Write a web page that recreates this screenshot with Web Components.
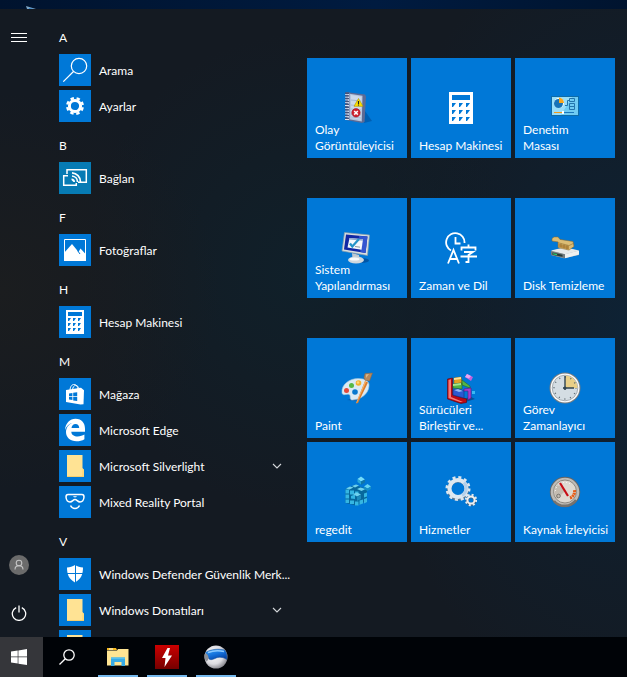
<!DOCTYPE html>
<html lang="tr">
<head>
<meta charset="utf-8">
<title>Başlat</title>
<style>
html, body { height: 100%; margin: 0; }
body { background: #00193a; color: #fff; font: 12px/16px Lato, "Noto Sans CJK JP", sans-serif; overflow: hidden; }
</style>
</head>
<body>
<start-desktop></start-desktop>
<script>
const ICONS = {
  menu: ['0 0 16 16', '<path d="M0 3.5h16M0 7.500h16M0 11.500h16" stroke="#fff"/>'],
  user: ['0 0 20 20', '<circle cx="10" cy="10" r="10" fill="#6b6b6b"/><g fill="none" stroke="#c4c4c4" stroke-width="1.100"><circle cx="10" cy="8" r="2.800"/><path d="M6 14.600c0-2.600 1.700-4 4-4s4 1.400 4 4"/></g>'],
  power: ['0 0 16 16', '<path d="M5.200 2.600a6.700 6.700 0 1 0 5.600 0M8 .5v7" fill="none" stroke="#fff" stroke-width="1.300"/>'],
  chevron: ['0 0 16 16', '<path d="M4 6l4 4 4-4" fill="none" stroke="#d5d8db" stroke-width="1.100"/>'],
  search: ['0 0 32 32', '<g fill="none" stroke="#fff" stroke-width="1.200"><circle cx="20" cy="12" r="7.700"/><path d="M14.500 17.500L4.300 27.700"/></g>'],
  taskSearch: ['0 0 16 16', '<g fill="none" stroke="#fff" stroke-width="1.300"><circle cx="10" cy="6" r="5.200"/><path d="M6.300 9.700L.5 15.500"/></g>'],
  settings: ['0 0 32 32', '<path fill="none" stroke="#fff" stroke-width="3" d="M16 10.400a5.600 5.600 0 1 1 0 11.200a5.600 5.600 0 1 1 0-11.200z"/><circle cx="16" cy="16" r="7.800" fill="none" stroke="#fff" stroke-width="2.400" stroke-dasharray="3.400 2.726" stroke-dashoffset="4.763"/>'],
  connect: ['0 0 32 32', '<g fill="none" stroke="#fff" stroke-width="1.500"><path d="M8 12V7.700h19.300v12.600H19"/><path d="M9 13.700H4.700v9.600h12.600V21"/><path d="M13 14a6 6 0 0 1 5.500 6M13 10.900a9 9 0 0 1 8.500 9" stroke-width="1.700"/></g><path d="M12.500 16.500a3.500 3.500 0 0 1 3.500 3.500h-1.500l-2-2z" fill="#fff"/>'],
  photos: ['0 0 32 32', '<path fill="none" stroke="#fff" d="M5.500 5.500h21v21h-21z"/><path fill="#fff" d="M5 19l8-9 6.500 8 2-3.500 5.500 6V27H5z"/><path d="M18.500 16.500l2.500 3.500" stroke="#0078d7"/>'],
  calc: ['0 0 32 32', '<path fill="#fff" d="M7 4h18v24H7z"/><path fill="#0078d7" d="M9 6h14v4H9zM9 12h3l-2 3H9zM14 12h3l-2 3h-1zM19 12h3l-2 3h-1zM9 17h3l-2 3H9zM14 17h3l-2 3h-1zM19 17h3l-2 3h-1zM9 22h3l-2 3H9zM14 22h3l-2 3h-1zM19 22h3l-2 3h-1z"/>'],
  calcBig: ['0 0 32 32', '<path fill="#fff" d="M4 0h24v32H4z"/><path fill="#0078d7" d="M7 3h18v5H7zM7 11h4l-3 4H7zM14 11h4l-3 4h-1zM21 11h4l-3 4h-1zM7 18h4l-3 4H7zM14 18h4l-3 4h-1zM21 18h4l-3 4h-1zM7 25h4l-3 4H7zM14 25h4l-3 4h-1zM21 25h4l-3 4h-1z"/>'],
  store: ['0 0 32 32', '<path d="M11 12.500c0-8 8-8 8-.5M13.500 12c.5-6 5.500-6 7-.500" fill="none" stroke="#fff" stroke-width="1"/><path fill="#fff" d="M7 12l15-2.300 3 2.500-.5 14L21.500 26.500 7 24z"/><path fill="#0078d7" d="M10 15.400l3.400-.5v3.300H10zM14.200 14.800l4-.6v4h-4zM10 19h3.400v3l-3.400-.5zM14.200 19h4v4l-4-.6z"/>'],
  edge: ['0 0 32 32', '<path fill="#fff" d="M6 16C6.500 9 11 4.700 16.500 4.700c6.500 0 9.500 4.500 9.500 10v3H12.300c.2 3.300 2.900 4.700 6.300 4.700 2.700 0 5-.8 6.800-1.900v4.800c-2.300 1.400-4.900 2-7.900 2-6.200 0-10.500-3.600-10.500-9.200 0-4.500 2.700-7.800 6.500-9.400C10 9.500 7.500 12 6 16zM12.500 14h7.700c0-2.300-1.100-4-3.700-4-2.400 0-3.800 1.800-4 4z"/>'],
  folder: ['0 0 32 32', '<path fill="#ffe394" d="M8 5h15.500v13l1.500 2v7H8z"/><path fill="#f7cf6d" d="M8 26h17v1H8z"/><path fill="#ffd97a" d="M23.500 18l1.500 2v6h-2z"/>'],
  mixed: ['0 0 32 32', '<g fill="none" stroke="#fff" stroke-width="1.500" stroke-linejoin="round"><path d="M9 8.500h14c1.500 0 2 1 2 2.500-.3 3.500-2 5-4 5-2.500 0-3-2.500-5-2.500s-2.500 2.500-5 2.500c-2 0-3.700-1.500-4-5 0-1.500.5-2.500 2-2.500z"/><path d="M11.500 19.500c1 2 2.700 3 4.500 3s3.500-1 4.500-3"/></g><path d="M14 10.300h4l-1 1h-2z" fill="#fff"/>'],
  defender: ['0 0 32 32', '<path fill="#fff" d="M16 7c2.500 1.600 5 2.200 8 2.500 0 6.500-1.700 11.500-8 15-6.300-3.500-8-8.500-8-15 3-.3 5.500-.9 8-2.500z"/><path stroke="#0078d7" d="M16.500 6v20M6 15.500h20"/>'],
  event: ['0 0 32 32', `<path fill="#004f9b" opacity=".6" d="M24 19l7 10-8 2z"/><path fill="#5d6a94" d="M5 0l19 2.500 1 2L23.500 30 21 31 5 28z"/><path fill="#b4c5dd" d="M7 1.500l14.500 2.200L20.800 29.500 6.500 27z"/><path fill="#cdd9ea" d="M10 3l10.500 1.700-.5 23L10 26z"/><path stroke="#9bb0d0" stroke-width=".8" d="M10 8l10 1M10 13l10 1M10 17l10 1M10 22l10 1M10 25l10 1"/><path d="M8.500 2v25" stroke="#8e9dbe" stroke-width="1"/><path d="M6 .5v28" stroke="#44527a" stroke-width="4" stroke-dasharray="1.500 1.300"/><path d="M6 1.900v27" stroke="#dfe5f2" stroke-width="4" stroke-dasharray=".8 2"/><path d="M17.500 6.500l4.500 7.800h-9z" fill="#ffe100" stroke="#a89000" stroke-width=".6"/><path d="M17.500 9v3M17.500 12.600v1" stroke="#222" stroke-width="1.200"/><circle cx="15" cy="20.800" r="4.200" fill="#cf2230" stroke="#a00f1b" stroke-width=".6"/><path d="M13.200 19l3.600 3.600m0-3.600l-3.600 3.600" stroke="#fff" stroke-width="1.500"/>`],
  control: ['0 0 32 32', '<path fill="#0e6ba8" d="M2 4h28v20H2z"/><path fill="#6fcbf3" d="M3 5h26v18H3z"/><path fill="#98ddf9" d="M3 5h20L12 23H3z"/><circle cx="10" cy="11" r="5" fill="#fff"/><circle cx="9.500" cy="11.500" r="4.500" fill="#1673b8"/><path fill="#f9a51b" d="M10 5.500a5.500 5.500 0 0 1 5 5.500h-5z"/><path fill="none" stroke="#2375ac" d="M16 13.500h2.500v-5H20M20.500 6.500h5v3h-5zM20.500 11.500h5v3h-5zM20.500 14.500h5v3h-5z"/><path d="M5 20.500h8" stroke="#f39a18"/><path d="M13 20.500h12" stroke="#1b78bd"/><path fill="#fff" d="M13 19h2v3h-2z"/>'],
  sysconfig: ['0 0 32 32', '<ellipse cx="20" cy="28.500" rx="8" ry="2.500" fill="#0056a7"/><path fill="#bfc9d1" d="M11 21l7 2 .5 4h-7z"/><ellipse cx="15" cy="28" rx="8" ry="3.500" fill="#cfd8dd"/><ellipse cx="13.500" cy="27" rx="5" ry="1.600" fill="#f9fbfb"/><path fill="#d8dedf" stroke="#849baa" stroke-width=".7" d="M3.500.5L28.500 3 26.500 23.500 1 19z"/><path fill="#1227a3" d="M5 2.500L26.500 4.500 24.500 21 3 17.500z"/><path fill="#3355d0" d="M18 4l8.500.6-2 16.400-5-1z"/><path fill="#f4f8fb" d="M8.500 6l13.500 1.200-1.500 10.500L6.500 15.500z"/><path fill="#8ba6cf" d="M8.500 6l13.500 1.200-.2 1.500L8.300 7.500z"/><path d="M9 11.500l2.300 3L18 7" fill="none" stroke="#2494c8" stroke-width="2.200"/><path d="M14 14.500l5 .700" stroke="#8b98a0"/>'],
  timelang: ['0 0 32 32', '<g fill="none" stroke="#fff" stroke-width="1.800"><path d="M6 18.500A9.200 9.200 0 1 1 19.500 11"/><path d="M10.500 5v6.500h5"/><path d="M3 31.500L8.500 18 14 31.500M5 27h7"/><path d="M16.500 18.500v-3h14v3M23.500 12.500v3M19 20h9l-4.500 3v7h-3M15.500 24.500H32"/></g>'],
  disk: ['0 0 32 32', '<g transform="translate(0 2.500) scale(1 .82)"><path fill="#aeb5b8" d="M2 20l14-4 14 4v5l-15 4L2 25z"/><path fill="#e6e9e9" d="M2 19.500L16 15.500l14 4-14 4.500z"/><path fill="#717b7e" d="M2 20l14 4v5L2 25z"/><path fill="#273a38" d="M3.500 22l10 2.700v2.500l-10-2.500z"/><path d="M4 23.500l4 1" stroke="#2fd173" stroke-width="1.500"/><path fill="#eef0f0" d="M16 24l14-4.500v5L16 29z"/><path fill="#dcbd75" stroke="#8a6a2c" stroke-width=".6" d="M3 5l2-2h4l2 3 13 2.500 1 6L20 19 9 16V9L3 8z"/><path fill="#b98d42" d="M9 11l11 3v4.500L9 15z"/><path d="M9 10l11 3.500 5-3M12 11v5m3-4v5m3-4v5" stroke="#8a6a2c" stroke-width=".6" fill="none"/></g>'],
  paint: ['0 0 32 32', '<path fill="#0a62b2" d="M6 28l8 1 12-9z"/><path fill="#dbeaf3" stroke="#9ec3da" stroke-width=".6" d="M1 21C0 12 9 6.500 17 6.500c8 0 11.500 3 11 7.500-.5 8-8 13.500-16.500 14-3 0-2-2.500-2.500-4.500C7.500 20 2 25 1 21z"/><circle cx="14" cy="20" r="2.800" fill="#0878ce"/><circle cx="5.500" cy="18.500" r="2.500" fill="#e5493b"/><circle cx="10.500" cy="13.500" r="2.500" fill="#56b844"/><circle cx="17.500" cy="11" r="2.800" fill="#f4b02c"/><circle cx="17" cy="10.500" r="1.300" fill="#fbd779"/><path fill="#dd7c2a" d="M24 9l3 1.500L17 31l-2 .5z"/><path fill="#f6b26b" d="M24 9l1.300.6L16 30.500l-1 .8z"/><path fill="#b8895c" stroke="#8b6442" stroke-width=".5" d="M24 1.500l7.500-.5-3 8-4.500-.7-1-2.800z"/><path fill="#dbb98b" d="M25 2.500l3-.5-3 4z"/>'],
  defrag: ['0 0 32 32', '<path fill="#074e97" d="M8 29l18-4 4 2-14 4.500z"/><path fill="#b90915" stroke="#65040a" stroke-width=".6" d="M2.500 7l5-1v17l14 4v3.500L16 31.500 2.500 27z"/><path fill="#f57a75" d="M3.500 8l2.500-.7V25l12 5h-3L3.500 26z"/><path fill="#e2a323" stroke="#936a13" stroke-width=".6" d="M9 6l7-1 1 6-8 1z"/><path fill="#ffe099" d="M9 6l7-1v2L9 8z"/><path fill="#54b544" stroke="#28672a" stroke-width=".6" d="M8 12l9-1v6l-9-1zM17 8l8 6v2l-8-3z"/><path fill="#a7e690" d="M8 12l8-1v2l-8 1z"/><path fill="#2b59d0" stroke="#192f82" stroke-width=".6" d="M8 18l5-1 6 2v7l-11-3z"/><path fill="#91b9f8" d="M9 18l4-1 5 2-4 1z"/><path fill="#a63fd0" stroke="#631675" stroke-width=".6" d="M19 17l7-1v10l-3 2v-9h-4z"/><path fill="#c160dc" d="M20 5l2-3 6 3-2 4z"/><path fill="#e9a6f2" d="M20 5l2-3 4 2-2 2.500z"/><path fill="#39b8f3" d="M27 19h3v3h-3z"/>'],
  task: ['0 0 32 32', '<circle cx="16" cy="16" r="15.500" fill="#777d80"/><circle cx="16" cy="16" r="14.500" fill="#fafafa"/><circle cx="16" cy="16" r="12.800" fill="#d4dde3" stroke="#8c959b" stroke-width=".7"/><path fill="#e9cf87" d="M16 16V3.500A12.500 12.500 0 0 1 28.500 16z"/><circle cx="16" cy="16" r="11" fill="none" stroke="#59666e" stroke-width="1.500" stroke-dasharray="1 4.760" stroke-dashoffset=".5"/><path d="M16 4v14M14 16h11" stroke="#304451" stroke-width="1.400"/><circle cx="16" cy="16" r="1.500" fill="#304451"/>'],
  regedit: ['0 0 32 32', '<path fill="#07689c" d="M4.500 13l9-4L26 13v12l-11 4.500L4.500 27z"/><path fill="#35b6e2" d="M4.500 13.500h3.500v4H4.500zM9 14.500h4v4H9zM14 15.500h3.500v3H14zM4.500 18.500h3.500v4H4.500zM4.500 23.500h3.500v3.500H4.500zM9 24.500h4V28H9zM14 25.500h3.500v4H14zM18.500 24.500l3.500-1v4l-3.500 1.300zM23 23l3-1v4l-3 1.500zM10 20l4-1.500V23l-4-.5zM23 17.500l3-1v4l-3 1z"/><path fill="#6fd2ee" d="M5 12.500l4-2 3.500 1-4 2zM11 10l4-1.500 3 1L14 11.500zM16 13l3.500-1.500 5 1.500-4 2zM12 18l4-1.500 4 2-4 2z"/><path fill="#1c8bbc" d="M16 21l4-2v4l-4 2z"/><path fill="#74dcf8" d="M16.500 3L20 .5 24 3.500l-4 2z"/><path fill="#2aa9d8" d="M16.500 3l3.500 2.500V8.500l-3.500-2.500z"/><path fill="#1177a9" d="M20 5.500l4-2V6.500l-4 2.500z"/><path fill="#65d3f2" d="M23 10.500l3.500-2.500 3.500 2.500-3.500 2z"/><path fill="#1590c7" d="M23 10.500l3.500 2v2.500L23 13zM26.500 12.500l3.500-2V13l-3.500 2z"/>'],
  services: ['0 0 32 32', '<g fill="none"><circle cx="13" cy="13.500" r="9" stroke="#5d7991" stroke-width="4"/><circle cx="13" cy="12.500" r="8.500" stroke="#dde8f1" stroke-width="4"/><circle cx="13" cy="12.500" r="11.200" stroke="#dde6ee" stroke-width="2.600" stroke-dasharray="3 2.864"/><path d="M19 6.500a8.500 8.500 0 0 1-2 13" stroke="#b5d0ea" stroke-width="3"/><circle cx="26" cy="24.500" r="3.800" stroke="#4e6378" stroke-width="3"/><circle cx="26" cy="24" r="3.600" stroke="#eef1f4" stroke-width="2"/><circle cx="26" cy="24" r="5.200" stroke="#e3eaf0" stroke-width="2" stroke-dasharray="2 2.084"/></g>'],
  resource: ['0 0 32 32', '<circle cx="16" cy="16" r="15.200" fill="#646464"/><circle cx="16" cy="16" r="14.300" fill="#bfbcb7"/><path d="M5 25A14 14 0 0 0 27 24" stroke="#77736e" stroke-width="2.500" fill="none"/><circle cx="16" cy="15.500" r="11.500" fill="#dfdad2" stroke="#8e8981"/><path fill="#c4bcb1" d="M8 23a11 11 0 0 1 1-15l7 7z"/><circle cx="9.500" cy="20" r="1.800" fill="none" stroke="#77736c"/><path d="M21 22c3-1 5-4 4.500-8" fill="none" stroke="#e75c17" stroke-width="3" stroke-dasharray="2 .6"/><path d="M6.500 15a9.500 9.500 0 0 1 16-6" stroke="#fff" stroke-dasharray="1 2" fill="none"/><path d="M11 7l8 13" stroke="#c70e16" stroke-width="2.200"/>'],
  windows: ['0 0 16 16', '<path fill="#fff" d="M0 2.400L6.700 1.500V7.600H0zM7.400 1.400L16 0v7.600H7.400zM0 8.300h6.700v6.200L0 13.600zM7.400 8.300H16V16l-8.600-1.300z"/>'],
  explorer: ['0 0 24 24', '<path fill="#f5b91d" d="M1 3h9l1 2h-10z"/><path fill="#fff" d="M3 3.500h4v1H3z"/><path fill="#ffe593" d="M1 5.500h10L12 4h10.500V20.500H1z"/><path fill="#37abe5" d="M5 12.500h14V21h-3.500v-4h-7v4H5z"/><path fill="#55c0ef" d="M5 12.500h14v1.500H5z"/>'],
  flash: ['0 0 24 24', '<defs><linearGradient id="r" x2="0" y2="1"><stop stop-color="#c00"/><stop offset="1" stop-color="#750000"/></linearGradient></defs><path fill="url(#r)" d="M0 0h24v24H0z"/><path fill="#fff" d="M12.500 3L7 13h3.500L9.500 22 17 10.500h-4L15 3z"/>'],
  iron: ['0 0 24 24', '<defs><radialGradient id="s" cx=".4" cy=".4" r=".68"><stop stop-color="#fff"/><stop offset=".6" stop-color="#dcdce1"/><stop offset="1" stop-color="#77777e"/></radialGradient><linearGradient id="b" x2=".6" y2="1"><stop stop-color="#3fa5f5"/><stop offset=".55" stop-color="#1572dc"/><stop offset="1" stop-color="#0745a6"/></linearGradient></defs><circle cx="12" cy="12" r="11.500" fill="url(#s)"/><path fill="url(#b)" stroke="#0a4796" stroke-width=".5" d="M1.500 7.500C7 4 15 3.500 20.500 5c2 2 2.700 5.500 2.300 9.500-3.500-2.500-8-3-11.800-1-2.500 1.300-4.500 1.500-6 .5L1.500 7.500z"/><path fill="#8d9096" d="M1 8.500c2 0 3.500 2 3.500 4.500 0 1.500-1 3-2.500 3.500-1.500-2.500-2-6-1-8z"/><path stroke="#8dcaff" stroke-width="1.500" fill="none" d="M4 7.500c5-2 11-2.300 16-1"/>'],
};

const define = (name, render) => customElements.define(name, class extends HTMLElement {
  connectedCallback() {
    if (this.shadowRoot) return;
    this.attachShadow({ mode: 'open' }).innerHTML = render(this);
  }
});
const RESET = 'button{font:inherit;color:inherit;border:0;margin:0;padding:0;background:none;text-align:left;cursor:default}button:hover{background-color:#ffffff1f}';

define('ui-icon', el => {
  const [box, art] = ICONS[el.getAttribute('name')];
  return `<style>:host{display:block;width:var(--icon,32px);height:var(--icon,32px);flex:none}svg{display:block;width:100%;height:100%}</style>
  <svg viewBox="${box}" aria-hidden="true">${art}</svg>`;
});

define('rail-button', el => `<style>${RESET}
  :host{display:block}
  button{display:grid;place-items:center;width:100%;height:48px}
  ui-icon{--icon:${el.getAttribute('size') || 16}px}
  </style><button aria-label="${el.getAttribute('label')}"><ui-icon name="${el.getAttribute('icon')}"></ui-icon></button>`);

define('app-group', el => `<style>${RESET}
  :host{display:block}
  button{display:block;width:100%;height:36px;padding-top:8px}
  </style><button>${el.getAttribute('letter')}</button><slot></slot>`);

define('app-row', el => `<style>${RESET}
  :host{display:block}
  button{display:flex;align-items:center;gap:8px;width:100%;height:36px}
  .pic{background:${el.getAttribute('color') || '#0078d7'}}
  .name{flex:1;min-width:0;white-space:nowrap;padding-top:2px}
  .more{--icon:16px;margin-right:3px}
  </style><button><ui-icon class="pic" name="${el.getAttribute('icon')}"></ui-icon><span class="name"><slot></slot></span>${
  el.hasAttribute('folder') ? '<ui-icon class="more" name="chevron"></ui-icon>' : ''}</button>`);

define('tile-group', () => `<style>
  :host{display:grid;grid-template-columns:repeat(3,100px);gap:4px}
  </style><slot></slot>`);

define('app-tile', el => `<style>${RESET}
  :host{display:block}
  button{display:grid;width:100%;height:100px;background:#0078d7;padding:0 4px 4px 8px}
  button:hover{outline:2px solid #6db3ea}
  ui-icon,.name{grid-area:1/1}
  ui-icon{justify-self:center;align-self:center;margin:4px 4px 0 0}
  .name{align-self:end}
  </style><button><ui-icon name="${el.getAttribute('icon')}"></ui-icon><span class="name"><slot></slot></span></button>`);

define('task-button', el => `<style>${RESET}
  :host{display:block}
  button{display:grid;place-items:center;height:40px;width:${el.getAttribute('width') || 40}px;box-sizing:border-box}
  :host([start]) button{background:#35363a;padding-right:5px}
  :host([running]) button{border-bottom:2px solid #76b9ed;padding-top:2px}
  ui-icon{--icon:${el.getAttribute('size') || 16}px}
  </style><button aria-label="${el.getAttribute('label')}"><ui-icon name="${el.getAttribute('icon')}"></ui-icon></button>`);

define('task-bar', () => `<style>
  :host{display:flex;background:#000307}
  nav{display:flex;gap:9px;margin-left:7px}
  </style>
  <task-button start width="43" icon="windows" label="Başlat"></task-button>
  <task-button width="48" icon="taskSearch" label="Ara"></task-button>
  <nav>
    <task-button running size="24" icon="explorer" label="Dosya Gezgini"></task-button>
    <task-button running size="24" icon="flash" label="Flash"></task-button>
    <task-button running size="24" icon="iron" label="Tarayıcı"></task-button>
  </nav>`);

define('start-menu', () => `<style>
  :host{display:grid;grid-template-columns:38px minmax(0,1fr) auto;grid-template-rows:minmax(0,1fr);overflow:hidden;
    background:radial-gradient(ellipse 220px 200px at 0 45%,#1b1d1f,transparent),radial-gradient(ellipse 220px 240px at 48% 42%,#10202a,transparent),radial-gradient(ellipse 260px 400px at 100% 50%,#0e2234,transparent),#141a22}
  .rail{display:flex;flex-direction:column;padding-top:5px}
  .rail>:first-child{margin-bottom:auto}
  .apps{padding:7px 15px 0 21px;overflow:hidden}
  app-row{margin-right:4px}
  .tiles{display:flex;flex-direction:column;gap:40px;padding:49px 12px 0 0}
  </style>
  <div class="rail">
    <rail-button icon="menu" label="Genişlet"></rail-button>
    <rail-button icon="user" size="20" label="Hesap"></rail-button>
    <rail-button icon="power" label="Güç"></rail-button>
  </div>
  <div class="apps">
    <app-group letter="A"><app-row icon="search">Arama</app-row><app-row icon="settings">Ayarlar</app-row></app-group>
    <app-group letter="B"><app-row icon="connect" color="#077bb4">Bağlan</app-row></app-group>
    <app-group letter="F"><app-row icon="photos">Fotoğraflar</app-row></app-group>
    <app-group letter="H"><app-row icon="calc">Hesap Makinesi</app-row></app-group>
    <app-group letter="M">
      <app-row icon="store">Mağaza</app-row>
      <app-row icon="edge">Microsoft Edge</app-row>
      <app-row icon="folder" folder>Microsoft Silverlight</app-row>
      <app-row icon="mixed">Mixed Reality Portal</app-row>
    </app-group>
    <app-group letter="V">
      <app-row icon="defender">Windows Defender Güvenlik Merk...</app-row>
      <app-row icon="folder" folder>Windows Donatıları</app-row>
      <app-row icon="folder"></app-row>
    </app-group>
  </div>
  <div class="tiles">
    <tile-group>
      <app-tile icon="event">Olay Görüntüleyicisi</app-tile>
      <app-tile icon="calcBig">Hesap Makinesi</app-tile>
      <app-tile icon="control">Denetim<br>Masası</app-tile>
    </tile-group>
    <tile-group>
      <app-tile icon="sysconfig">Sistem Yapılandırması</app-tile>
      <app-tile icon="timelang">Zaman ve Dil</app-tile>
      <app-tile icon="disk">Disk Temizleme</app-tile>
    </tile-group>
    <tile-group>
      <app-tile icon="paint">Paint</app-tile>
      <app-tile icon="defrag">Sürücüleri Birleştir ve...</app-tile>
      <app-tile icon="task">Görev Zamanlayıcı</app-tile>
      <app-tile icon="regedit">regedit</app-tile>
      <app-tile icon="services">Hizmetler</app-tile>
      <app-tile icon="resource">Kaynak İzleyicisi</app-tile>
    </tile-group>
  </div>`);

define('start-desktop', () => `<style>
  :host{display:flex;flex-direction:column;height:100vh}
  header{height:9px;background:linear-gradient(90deg,#00132e,#001b40 60%,#00142f)}
  header svg{display:block;margin-left:26px}
  start-menu{flex:1;min-height:0}
  </style>
  <header><svg width="10" height="9" aria-hidden="true"><path d="M0 6l10 3H1z" fill="#7fa6c4"/><path d="M3 8l5 1H3z" fill="#2a82d2"/></svg></header>
  <start-menu></start-menu>
  <task-bar></task-bar>`);
</script>
</body>
</html>
